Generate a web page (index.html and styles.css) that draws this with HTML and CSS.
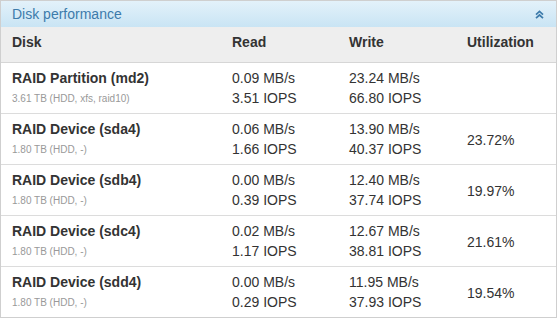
FILE: index.html
```html
<!DOCTYPE html>
<html>
<head>
<meta charset="utf-8">
<link rel="stylesheet" href="styles.css">
</head>
<body>
<div class="panel">
  <div class="panel-head">
    <span class="panel-title">Disk performance</span>
    <svg class="collapse" width="9" height="9" viewBox="0 0 9 9"><path d="M1 4.6 L4.5 1.4 L8 4.6 M1 8.2 L4.5 5 L8 8.2" fill="none" stroke="#3d7bab" stroke-width="1.7"/></svg>
  </div>
  <table class="perf">
    <colgroup><col class="c1"><col class="c2"><col class="c3"><col class="c4"></colgroup>
    <thead>
      <tr><th>Disk</th><th>Read</th><th>Write</th><th>Utilization</th></tr>
    </thead>
    <tbody>
      <tr><td><div class="name">RAID Partition (md2)</div><div class="sub">3.61 TB (HDD, xfs, raid10)</div></td><td>0.09 MB/s<br>3.51 IOPS</td><td>23.24 MB/s<br>66.80 IOPS</td><td></td></tr>
      <tr><td><div class="name">RAID Device (sda4)</div><div class="sub">1.80 TB (HDD, -)</div></td><td>0.06 MB/s<br>1.66 IOPS</td><td>13.90 MB/s<br>40.37 IOPS</td><td class="util">23.72%</td></tr>
      <tr><td><div class="name">RAID Device (sdb4)</div><div class="sub">1.80 TB (HDD, -)</div></td><td>0.00 MB/s<br>0.39 IOPS</td><td>12.40 MB/s<br>37.74 IOPS</td><td class="util">19.97%</td></tr>
      <tr><td><div class="name">RAID Device (sdc4)</div><div class="sub">1.80 TB (HDD, -)</div></td><td>0.02 MB/s<br>1.17 IOPS</td><td>12.67 MB/s<br>38.81 IOPS</td><td class="util">21.61%</td></tr>
      <tr><td><div class="name">RAID Device (sdd4)</div><div class="sub">1.80 TB (HDD, -)</div></td><td>0.00 MB/s<br>0.29 IOPS</td><td>11.95 MB/s<br>37.93 IOPS</td><td class="util">19.54%</td></tr>
    </tbody>
  </table>
</div>
</body>
</html>
```
FILE: styles.css
```css
html, body { margin: 0; padding: 0; background: #fff; }
body { font-family: "Liberation Sans", Arial, sans-serif; color: #333; }
.panel { width: 555px; border: 1px solid #cfcfcf; }
.panel-head {
  height: 26px;
  display: flex; align-items: center; justify-content: space-between;
  padding: 0 12px 0 11px;
  background: linear-gradient(#e3f1fa, #c9e4f4);
  box-sizing: border-box;
}
.panel-title { font-size: 14px; color: #3d7bab; line-height: 20px; }
.collapse { display: block; margin-top: 0; }
.perf { width: 555px; border-collapse: collapse; table-layout: fixed; }
.c1 { width: 220px; } .c2 { width: 117px; } .c3 { width: 118px; } .c4 { width: 100px; }
.perf th {
  background: #eeeeee; text-align: left; font-size: 14px; font-weight: bold;
  line-height: 20px; padding: 5px 11px 10px; border-bottom: 1px solid #d6d6d6; color: #333;
}
.perf th:first-child, .perf td:first-child { padding-left: 11px; }
.perf td {
  font-size: 14px; line-height: 20px; padding: 5px 11px 5px; vertical-align: top;
  border-bottom: 1px solid #dcdcdc; white-space: nowrap;
}
.perf tbody tr:last-child td { border-bottom: none; }
.perf td.util { vertical-align: middle; padding-bottom: 3px; }
.name { font-weight: bold; font-size: 14px; line-height: 20px; }
.sub { font-size: 10px; line-height: 20px; color: #999; padding-top: 1px; margin-bottom: -1px; }
```
